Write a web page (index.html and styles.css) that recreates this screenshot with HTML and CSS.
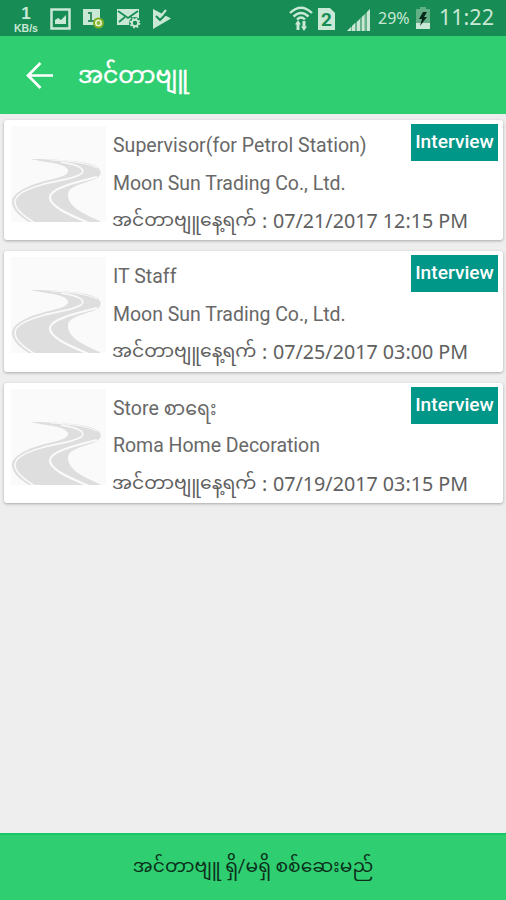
FILE: index.html
```html
<!DOCTYPE html>
<html lang="my">
<head>
    <meta charset="UTF-8">
    <meta name="viewport" content="width=device-width, initial-scale=1.0">
    <title>အင်တာဗျူ</title>
    <link rel="stylesheet" href="styles.css">
</head>
<body>
    <!-- Shared road picture -->
    <svg class="defs" width="0" height="0">
        <symbol id="road" viewBox="0 0 95 96">
            <path fill="#dedede" d="M19 33C45 33 75 35 84 40C92 44 92 50 82 54C66 59 57 62 57 68C56 80 72 88 89 95V96H18C8 90 1 83 1 76C1 66 20 58 38 54C52 51 58 48 57 44C54 37 38 37 19 33Z"/>
            <path fill="none" stroke="#fafafa" stroke-width="1.6" d="M50 36C70 39 75 44 70 48C60 54 46 54 30 59C12 64 4 70 4 76C4 84 14 91 24 97"/>
            <path fill="none" stroke="#fafafa" stroke-width="2.2" d="M86 51C66 56 40 62 39 71C38 81 62 90 78 97"/>
            <path fill="none" stroke="#fafafa" stroke-width="1" d="M40 34C60 35 76 37 86 42"/>
        </symbol>
    </svg>

    <div class="status-bar">
        <div class="speed"><b>1</b><span>KB/s</span></div>
        <svg class="icon-image" width="21" height="22" viewBox="0 0 21 22">
            <path fill="none" stroke="currentColor" stroke-width="2.5" d="M1.5 1.5h18v19h-18z"/>
            <path fill="currentColor" d="M5 16v-4l3-2 3 2 5-5v9z"/>
        </svg>
        <svg class="icon-sim" width="22" height="20" viewBox="0 0 22 20">
            <path fill="currentColor" d="M0 0h17v16H0z"/>
            <path fill="none" stroke="#388f62" stroke-width="2" d="M5 4h3v8M5 12h6"/>
            <circle cx="15.5" cy="14" r="4" fill="#8fb93a" stroke="#7fae24" stroke-width="3"/>
            <circle cx="15.5" cy="14" r="2.700" fill="none" stroke="#e4f2cf" stroke-width="1.6"/>
        </svg>
        <svg class="icon-mail" width="24" height="20" viewBox="0 0 24 20">
            <path fill="currentColor" d="M0 0h22v16H0z"/>
            <path fill="none" stroke="#178c54" stroke-width="1.7" d="M1 2l10 7L21 2M2 13l6-5M14 8l4 4"/>
            <circle cx="18" cy="14" r="6" fill="#178c54"/>
            <circle cx="18" cy="14" r="3.2" fill="none" stroke="currentColor" stroke-width="2"/>
            <circle cx="18" cy="14" r="4.6" fill="none" stroke="currentColor" stroke-width="1.6" stroke-dasharray="1.8 1.8"/>
        </svg>
        <svg class="icon-play" width="19" height="20" viewBox="0 0 19 20">
            <path fill="currentColor" d="M0 0l18 9.500L0 20z"/>
            <path fill="none" stroke="#178c54" stroke-width="2.2" d="M3 7l4 4 9-9"/>
            <path fill="none" stroke="currentColor" stroke-width="2" d="M8 7l5-6"/>
        </svg>

        <svg class="icon-wifi" width="24" height="25" viewBox="0 0 24 25">
            <path fill="none" stroke="currentColor" stroke-width="2.4" d="M1 7Q12-3.500 23 7M4.500 10.500Q12 3.500 19.500 10.500M8 13.500Q12 9.500 16 13.500"/>
            <path fill="currentColor" d="M9 14l3 4.500h-1.500V24h-3v-5.500H6zM15 25l-3-4.500h1.500V15h3v5.500H18z"/>
        </svg>
        <div class="sim">2</div>
        <svg class="icon-signal" width="24" height="23" viewBox="0 0 24 23">
            <path fill="#6ab38c" d="M0 23L23 1v22z"/>
            <path fill="currentColor" d="M0 23l4-4v4zM5 23v-5l3-3v8zM10 23v-9l3-3v12zM15 23V9l2.500-2.500V23zM20 23V4l3-3v22z"/>
        </svg>
        <span class="percent">29%</span>
        <svg class="icon-battery" width="14" height="22" viewBox="0 0 14 22">
            <path fill="#63b087" d="M4 0h6v2h4v20H0V2h4z"/>
            <path fill="currentColor" d="M0 16h14v6H0z"/>
            <path fill="#06291a" d="M7 5L3 12h3l-2 7 7-9H8l3-5z"/>
        </svg>
        <span class="clock">11:22</span>
    </div>

    <header class="toolbar">
        <svg class="back" width="27" height="27" viewBox="0 0 27 27">
            <path fill="none" stroke="currentColor" stroke-width="2.7" d="M27 13.500H2M14.500 1L2 13.500 14.500 26"/>
        </svg>
        <h1>အင်တာဗျူ</h1>
    </header>

    <main class="list">
        <article class="card">
            <svg class="thumb"><use href="#road"/></svg>
            <div class="info">
                <p class="job">Supervisor(for Petrol Station)</p>
                <p class="company">Moon Sun Trading Co., Ltd.</p>
                <p class="date"><span class="label">အင်တာဗျူနေ့ရက်</span><span class="colon">:</span><span class="time">07/21/2017 12:15 PM</span></p>
            </div>
            <span class="badge">Interview</span>
        </article>
        <article class="card">
            <svg class="thumb"><use href="#road"/></svg>
            <div class="info">
                <p class="job">IT Staff</p>
                <p class="company">Moon Sun Trading Co., Ltd.</p>
                <p class="date"><span class="label">အင်တာဗျူနေ့ရက်</span><span class="colon">:</span><span class="time">07/25/2017 03:00 PM</span></p>
            </div>
            <span class="badge">Interview</span>
        </article>
        <article class="card">
            <svg class="thumb"><use href="#road"/></svg>
            <div class="info">
                <p class="job">Store <span class="my">စာရေး</span></p>
                <p class="company">Roma Home Decoration</p>
                <p class="date"><span class="label">အင်တာဗျူနေ့ရက်</span><span class="colon">:</span><span class="time">07/19/2017 03:15 PM</span></p>
            </div>
            <span class="badge">Interview</span>
        </article>
    </main>

    <button class="check-btn">အင်တာဗျူ ရှိ/မရှိ စစ်ဆေးမည်</button>
</body>
</html>
```
FILE: styles.css
```css
* {
    margin: 0;
    padding: 0;
    box-sizing: border-box;
}

body {
    height: 900px;
    display: flex;
    flex-direction: column;
    overflow: hidden;
    background: #eeeeee;
    font-family: Roboto, "Noto Sans Myanmar", "Noto Sans", sans-serif;
}

svg {
    display: block;
    flex: none;
}

.defs {
    position: absolute;
}

.status-bar {
    height: 36px;
    flex: none;
    display: flex;
    align-items: flex-start;
    background: #178c54;
    color: #c9e8d5;
    white-space: nowrap;
}

.speed {
    width: 26px;
    margin-left: 13px;
    padding-top: 4px;
    display: flex;
    flex-direction: column;
    align-items: center;
    font-family: "Liberation Sans", sans-serif;
}

.speed b {
    font-size: 17px;
    line-height: 19px;
}

.speed span {
    font-size: 10.5px;
    line-height: 10px;
    font-weight: bold;
}

.icon-image {
    margin: 8px 0 0 11px;
}

.icon-sim,
.icon-mail,
.icon-play {
    margin: 9px 0 0 12px;
}

.icon-wifi {
    margin: 6px 0 0 auto;
}

.sim {
    width: 17px;
    height: 22px;
    margin: 8px 0 0 5px;
    background: #c9e8d5;
    clip-path: polygon(0 0, 12px 0, 100% 5px, 100% 100%, 0 100%);
    color: #178c54;
    font: bold 19px/23px Roboto, sans-serif;
    text-align: center;
}

.icon-signal {
    margin: 8px 0 0 12px;
}

.percent {
    width: 33px;
    margin: 7px 0 0 7px;
    font: 16px/22px "Noto Sans", sans-serif;
}

.icon-battery {
    margin: 7px 0 0 5px;
}

.clock {
    width: 55px;
    margin: 3px 12px 0 9px;
    font: 21.5px/28px "Noto Sans", sans-serif;
}

.toolbar {
    height: 78px;
    flex: none;
    display: flex;
    align-items: center;
    padding-left: 26px;
    background: #2fce71;
    color: #fff;
}

.toolbar h1 {
    margin-left: 25px;
    font-size: 23.5px;
    font-weight: 400;
    line-height: 40px;
    white-space: nowrap;
    -webkit-text-stroke: 0.4px currentColor;
}

.list {
    flex: 1;
    display: flex;
    flex-direction: column;
    gap: 11px;
    padding: 6px 3px 0 4px;
}

.card {
    position: relative;
    height: 120.3px;
    display: flex;
    padding: 6px 0 0 7px;
    background: #fff;
    border-radius: 3px;
    box-shadow: 0 1px 3px rgba(0, 0, 0, 0.3);
}

.thumb {
    width: 95px;
    height: 96px;
    background: #fafafa;
}

.info {
    margin-left: 7px;
    color: #686868;
    font-size: 19.5px;
    white-space: nowrap;
}

.info p {
    height: 37.5px;
    line-height: 39px;
}

.job {
    letter-spacing: 0.03px;
}

.my {
    font-size: 19px;
}

.company {
    letter-spacing: -0.02px;
}

.date {
    display: flex;
    color: #606060;
}

.label {
    width: 150px;
    margin-left: -1px;
    font-size: 18.8px;
}

.colon {
    width: 11px;
    font-family: "Noto Sans", sans-serif;
}

.time {
    font-family: "Noto Sans", sans-serif;
    font-size: 19.7px;
}

.badge {
    position: absolute;
    top: 4px;
    right: 5px;
    width: 87px;
    height: 37px;
    background: #009688;
    color: #fff;
    font-size: 19.2px;
    font-weight: 500;
    line-height: 36px;
    text-align: center;
}

.check-btn {
    height: 67px;
    flex: none;
    border: none;
    border-top: 2px solid #18c765;
    background: #2fce71;
    color: #0b2f1a;
    font-family: Roboto, "Noto Sans Myanmar", sans-serif;
    font-size: 18.7px;
}
```
